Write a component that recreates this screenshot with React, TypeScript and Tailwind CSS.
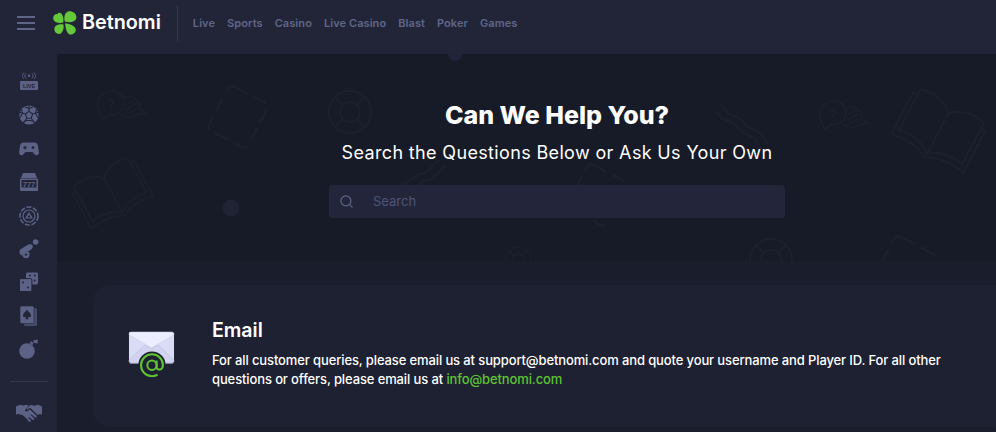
import { Search } from "lucide-react";

const navItems = ["Live", "Sports", "Casino", "Live Casino", "Blast", "Poker", "Games"];
const line = "#1c202e";

function Book({ x, y, r, s = 1 }: { x: number; y: number; r: number; s?: number }) {
  return (
    <g transform={`translate(${x} ${y}) rotate(${r}) scale(${s})`} fill="none" stroke={line} strokeWidth="2">
      <path d="M0 -22C-8 -32 -24 -34 -36 -30V16C-24 13 -8 15 0 24C8 15 24 13 36 16V-30C24 -34 8 -32 0 -22Z" />
      <path d="M0 -22V24" />
      <path d="M-36 -24H-41V23C-28 20 -10 21 0 28C10 21 28 20 41 23V-24H36" />
    </g>
  );
}

function Chat({ x, y, s = 1 }: { x: number; y: number; s?: number }) {
  return (
    <g transform={`translate(${x} ${y}) scale(${s})`} fill="none" stroke={line} strokeWidth="2">
      <path d="M-10 -20C-23 -20 -28 -8 -26 0C-25 4 -22 8 -21 14L-13 8C-2 9 5 2 5 -7C5 -15 -2 -20 -10 -20Z" />
      <path d="M6 -13C17 -15 23 -7 24 1L30 6L20 8C14 12 6 12 0 7" />
      <path d="M8 -4L16 -9M6 2L19 -5M8 7L22 0" />
      <path d="M-13 -8C-10 -11 -7 -9 -8 -6C-9 -4 -11 -4 -11 -1" />
    </g>
  );
}

function Dashed({ x, y, r, s = 1 }: { x: number; y: number; r: number; s?: number }) {
  return (
    <g transform={`translate(${x} ${y}) rotate(${r}) scale(${s})`} fill="none" stroke={line} strokeWidth="2.5" strokeDasharray="13 8" strokeLinecap="round">
      <rect x="-22" y="-25" width="44" height="50" rx="5" />
    </g>
  );
}

function Buoy({ x, y, s = 1 }: { x: number; y: number; s?: number }) {
  return (
    <g transform={`translate(${x} ${y}) scale(${s})`} fill="none" stroke={line} strokeWidth="2.2">
      <circle r="21" />
      <circle r="10" />
      <path d="M-15 -15L-7 -7M15 -15L7 -7M-15 15L-7 7M15 15L7 7" />
    </g>
  );
}

function Background() {
  return (
    <svg className="absolute left-0 top-0" width="939" height="207" viewBox="0 0 939 207">
      <Chat x={63} y={54} s={0.85} />
      <Dashed x={181} y={63} r={28} />
      <Book x={56} y={141} r={-28} s={0.85} />
      <circle cx="174" cy="154" r="8.5" fill="#202333" />
      <circle cx="398" cy="0" r="7" fill="#20233a" />
      <Buoy x={293} y={58} />
      <g fill="none" stroke={line} strokeWidth="2">
        <path d="M666 53C672 66 680 58 688 70C694 78 704 74 710 90" />
        <path d="M660 58C666 71 674 63 682 75C688 83 698 79 704 95" />
        <path d="M343 130C352 132 358 118 366 120C372 120 376 108 383 106" />
        <path d="M349 136C358 138 364 124 372 126C378 126 382 114 389 112" />
      </g>
      <Dashed x={540} y={141} r={28} />
      <Buoy x={714} y={206} />
      <Buoy x={461} y={206} s={0.6} />
      <Chat x={785} y={64} s={0.85} />
      <Book x={881} y={79} r={28} />
      <Dashed x={848} y={216} r={28} s={1.1} />
    </svg>
  );
}

function LiveIcon() {
  return (
    <svg width="20" height="20" viewBox="0 0 20 20" fill="#5c6285">
      <rect x="1" y="9" width="18" height="9" rx="1" />
      <text x="10" y="15.8" textAnchor="middle" fontSize="5.5" fontWeight="700" fontFamily="Liberation Sans" fill="#222538">LIVE</text>
      <circle cx="10" cy="3.8" r="1.2" />
      <path d="M7 1.3C5.6 2.7 5.6 4.9 7 6.3M13 1.3C14.4 2.7 14.4 4.9 13 6.3M5 .5C3 2.6 3 5 5 7M15 .5C17 2.6 17 5 15 7" fill="none" stroke="#5c6285" strokeWidth=".9" />
    </svg>
  );
}

function BallIcon() {
  return (
    <svg width="20" height="20" viewBox="0 0 20 20" fill="#5c6285">
      <circle cx="10" cy="10" r="9.6" />
      <g fill="none" stroke="#222538" strokeWidth="1.1">
        <path d="M10 6.4L13.6 9L12.2 13.2H7.8L6.4 9Z" />
        <path d="M10 6.4V.5M13.6 9L19.2 7.2M12.2 13.2L15.7 18M7.8 13.2L4.3 18M6.4 9L.8 7.2" />
        <path d="M6 2L10 3.5L14 2M17.5 4L16.6 8.5L18.8 12.5M2.5 4L3.4 8.5L1.2 12.5M4.5 17L8 15.5H12L15.5 17" />
      </g>
    </svg>
  );
}

function PadIcon() {
  return (
    <svg width="20" height="16" viewBox="0 0 20 16" fill="#5c6285">
      <path d="M4.5 1.5H15.5C17.5 1.5 18.7 3 19 5L19.9 11.5C20.2 14 17.4 15.3 15.8 13.5L13.5 11H6.5L4.2 13.5C2.6 15.3 -.2 14 .1 11.5L1 5C1.3 3 2.5 1.5 4.5 1.5Z" />
      <path d="M4.2 6H5.4V4.8H6.6V6H7.8V7.2H6.6V8.4H5.4V7.2H4.2Z" fill="#222538" />
      <circle cx="14" cy="6.6" r="1.4" fill="#222538" />
    </svg>
  );
}

function SlotIcon() {
  return (
    <svg width="20" height="20" viewBox="0 0 20 20" fill="#5c6285">
      <path d="M4 1H16L18 6H2Z" />
      <rect x="1" y="6.6" width="18" height="12.4" rx="1" />
      <rect x="2.5" y="8" width="15" height="7.5" fill="#222538" />
      <text x="10" y="14.6" textAnchor="middle" fontSize="7.5" fontWeight="700" fontFamily="Liberation Sans" fill="#5c6285">777</text>
    </svg>
  );
}

function ChipIcon() {
  return (
    <svg width="20" height="20" viewBox="0 0 20 20" fill="none" stroke="#5c6285">
      <circle cx="10" cy="10" r="9" strokeWidth="1.6" strokeDasharray="5 1.6" />
      <circle cx="10" cy="10" r="6" strokeWidth="1.2" />
      <path d="M10 5.8L14 12.5H6Z" fill="#5c6285" stroke="none" />
      <path d="M10 8.6L11.6 11.4H8.4Z" fill="#222538" stroke="none" />
    </svg>
  );
}

function CannonIcon() {
  return (
    <svg width="20" height="20" viewBox="0 0 20 20" fill="#5c6285">
      <circle cx="16.6" cy="3" r="2.8" />
      <path d="M1.2 10.5L9.5 5.6C11 4.8 12.8 5.2 13.5 6.6C14.2 8 13.6 9.5 12.4 10.3L9.8 12.2A5 5 0 0 0 3.2 16.8C.9 16 -.4 12.6 1.2 10.5Z" />
      <circle cx="7" cy="15.6" r="3.6" />
      <circle cx="7" cy="15.6" r="1.2" fill="#222538" />
    </svg>
  );
}

function DiceIcon() {
  return (
    <svg width="20" height="20" viewBox="0 0 20 20">
      <rect x="7" y="0.5" width="12" height="12" rx="1.4" fill="#5c6285" />
      <rect x=".5" y="6.6" width="12.4" height="12.9" rx="1.4" fill="#5c6285" stroke="#222538" />
      <g fill="#222538">
        <circle cx="4" cy="10.5" r="1" />
        <circle cx="9" cy="15.5" r="1" />
        <circle cx="11" cy="3.5" r="1" />
        <circle cx="15.8" cy="3.5" r="1" />
        <circle cx="15.8" cy="8.5" r="1" />
      </g>
    </svg>
  );
}

function CardsIcon() {
  return (
    <svg width="17" height="20" viewBox="0 0 17 20">
      <rect x="4" y="2" width="13" height="18" rx="1.5" fill="#474c6a" />
      <rect x="0" y="0" width="14" height="17.6" rx="1.5" fill="#5c6285" stroke="#222538" strokeWidth=".6" />
      <path d="M7 3.7C8.5 5.7 11 7.2 11 9.4C11 11.2 9 11.8 7.8 10.8L8.6 13.3H5.4L6.2 10.8C5 11.8 3 11.2 3 9.4C3 7.2 5.5 5.7 7 3.7Z" fill="#222538" />
    </svg>
  );
}

function BombIcon() {
  return (
    <svg width="20" height="20" viewBox="0 0 20 20" fill="#5c6285">
      <circle cx="8" cy="12" r="7.8" />
      <path d="M10.5 3.8L12.5 2.2L14.5 4.2L13 6.5Z" />
      <path d="M14 1.5L18.6 .6V4.6L14.8 3.8Z" />
    </svg>
  );
}

function HandshakeIcon() {
  return (
    <svg width="26" height="18" viewBox="0 0 26 18" fill="#5c6285">
      <path d="M0 2.5L4 .8L7 1.5L10.5 .8L13 2L9.4 5.6C8.6 6.6 9.8 8.2 11.2 7.3L13.8 5.4L20.4 11.6C21.4 12.8 20 14.2 18.8 13.2L15.4 10.2L14.6 11L18 14.2C18.8 15.6 17.2 16.8 16 15.6L13 13L12.2 13.8L15 16.4C15.4 17.6 14 18.4 13 17.6L11.8 16.6C11.6 15 10.6 14.2 9.6 14.2C9.4 13 8.4 12.2 7.4 12.3C7.2 11 5.8 10.2 4.6 11L3.2 10L0 10.6Z" />
      <path d="M26 2.5L22 .8L18 1.8L14.6 .8L11 4.6C10.4 5.4 11 6 11.6 5.6L14 3.8L22 11.2L23 10L26 10.6Z" />
    </svg>
  );
}

function Clover() {
  return (
    <svg width="24" height="24" viewBox="0 0 24 24" fill="#64c93a">
      <path d="M10.2 11.6C6.5 12.8 1.8 11.6 .6 9C-.6 6 1.4 2.6 4.6 3C5 1.6 7 1.2 8 2.2C10 4 11 8 10.2 11.6Z" />
      <path d="M11.8 10.6C10.6 6.6 11.6 1.6 15 .6C18.6 -.4 23 2 23.4 6C23.6 9 20.6 11.2 17 11.2C15.2 11.2 13.4 11 11.8 10.6Z" />
      <path d="M10.4 13.4C6.4 12.8 1.8 14.2 1.4 17.4C1 20.4 3.6 23.4 7 22.8C9.2 22.4 11.4 17.6 10.4 13.4Z" />
      <path d="M12.2 12.6C12.4 16 13.2 21.6 16 23.2C18.6 24.4 22.6 22.4 22.8 19C23 15.4 16.4 12.6 12.2 12.6Z" />
    </svg>
  );
}

function EnvelopeIcon() {
  return (
    <svg className="-mt-[4px]" width="47" height="46" viewBox="0 0 50 49">
      <path d="M2 1H46C48 1 49 2 49 4V31C49 33 48 34 46 34H4C2 34 1 33 1 31V4C1 2 1 1 2 1Z" fill="#dadcf5" />
      <path d="M1 31L18 15L25 19L32 15L49 31V32C49 33 48 34 46 34H4C2 34 1 33 1 32Z" fill="#d2d4ef" stroke="#b3b5d2" strokeWidth=".5" />
      <path d="M1 4C1 2 2 1 4 1H46C48 1 49 2 49 4L25 18Z" fill="#eceeff" stroke="#c4c6e2" strokeWidth=".5" />
      <path d="M4 34H46C48 34 49 33 49 31.5V32.5C49 34 48 35 46 35H4C2 35 1 34 1 32.5V31.5C1 33 2 34 4 34Z" fill="#9a9cbc" />
      <g transform="translate(0 3.5) translate(25.5 33) scale(1.08) translate(-25.5 -33)">
        <circle cx="25.5" cy="33" r="13.5" fill="#1e2132" />
        <circle cx="25.5" cy="33" r="4.6" fill="none" stroke="#5fc431" strokeWidth="2" />
        <path d="M30.1 28.4V35C30.1 38.4 36.3 38.2 36.3 33C36.3 27 31.5 22.2 25.5 22.2C19.5 22.2 14.7 27 14.7 33C14.7 39 19.5 43.8 25.5 43.8C27.6 43.8 29.4 43.2 31 42.2" fill="none" stroke="#5fc431" strokeWidth="2" />
      </g>
    </svg>
  );
}

export default function App() {
  return (
    <div className="flex h-[432px] w-[996px] flex-col overflow-hidden bg-[#171b27] font-['Inter','Liberation_Sans',sans-serif] text-white">
      <header className="flex h-[54px] shrink-0 items-center bg-[#222538] pb-[8px]">
        <button className="ml-[17px] flex w-[18px] flex-col gap-[4.3px]">
          <span className="h-[1.5px] bg-[#5f6587]" />
          <span className="h-[1.5px] bg-[#5f6587]" />
          <span className="h-[1.5px] bg-[#5f6587]" />
        </button>
        <div className="ml-[18px] flex items-center gap-[5px]">
          <Clover />
          <span className="text-[19.8px] font-semibold leading-none">Betnomi</span>
        </div>
        <div className="ml-[16px] h-[35px] w-px bg-[#33374d]" />
        <nav className="ml-[15px] flex gap-3 text-[11px] font-semibold tracking-[0.08px] text-[#5f6587]">
          {navItems.map((item) => (
            <a key={item} href="#">{item}</a>
          ))}
        </nav>
      </header>
      <div className="flex min-h-0 flex-1">
        <aside className="flex w-[57px] shrink-0 flex-col items-center bg-[#222538] pt-[17px]">
          <div className="flex h-[22px] items-center"><LiveIcon /></div>
          <div className="mt-[11.4px] flex h-[22px] items-center"><BallIcon /></div>
          <div className="mt-[11.4px] flex h-[22px] items-center"><PadIcon /></div>
          <div className="mt-[11.4px] flex h-[22px] items-center"><SlotIcon /></div>
          <div className="mt-[11.4px] flex h-[22px] items-center"><ChipIcon /></div>
          <div className="mt-[11.4px] flex h-[22px] items-center"><CannonIcon /></div>
          <div className="mt-[11.4px] flex h-[22px] items-center"><DiceIcon /></div>
          <div className="mt-[11.4px] flex h-[22px] items-center"><CardsIcon /></div>
          <div className="mt-[11.4px] flex h-[22px] items-center"><BombIcon /></div>
          <div className="mt-[21px] h-px w-[38px] bg-[#33374d]" />
          <div className="mt-[22px]"><HandshakeIcon /></div>
        </aside>
        <main className="w-[1000px] shrink-0">
          <section className="relative h-[207px] overflow-hidden">
            <Background />
            <div className="relative flex flex-col items-center pt-[45px]">
              <h1 className="text-[25px] font-extrabold leading-[32px]">Can We Help You?</h1>
              <p className="mt-[10px] text-[18px] font-normal leading-[24px] tracking-[0.35px]">Search the Questions Below or Ask Us Your Own</p>
              <div className="mt-[20px] flex h-[33px] w-[456px] items-center rounded-[3px] bg-[#23263a] text-[#4e5478]">
                <Search className="ml-[10px] text-[#5f6587]" size={15} />
                <span className="ml-[19px] text-[13px]">Search</span>
              </div>
            </div>
          </section>
          <section className="h-[171px] bg-[conic-gradient(#171b27_25%,#1d2030_0_50%,#171b27_0_75%,#1d2030_0)] bg-[length:2px_2px] px-[36px] pt-[24px]">
            <div className="flex h-[142px] items-center rounded-[16px] bg-[#1e2132] pl-[35px]">
              <EnvelopeIcon />
              <div className="ml-[37px] -mt-[8px]">
                <h2 className="text-[19.5px] font-semibold leading-[28px]">Email</h2>
                <p className="mt-[7px] whitespace-nowrap text-[13px] font-medium leading-[19px] tracking-[-0.12px]">
                  For all customer queries, please email us at support@betnomi.com and quote your username and Player ID. For all other
                  <br />
                  questions or offers, please email us at <a href="#" className="text-[#5fc431]">info@betnomi.com</a>
                </p>
              </div>
            </div>
          </section>
        </main>
      </div>
    </div>
  );
}
